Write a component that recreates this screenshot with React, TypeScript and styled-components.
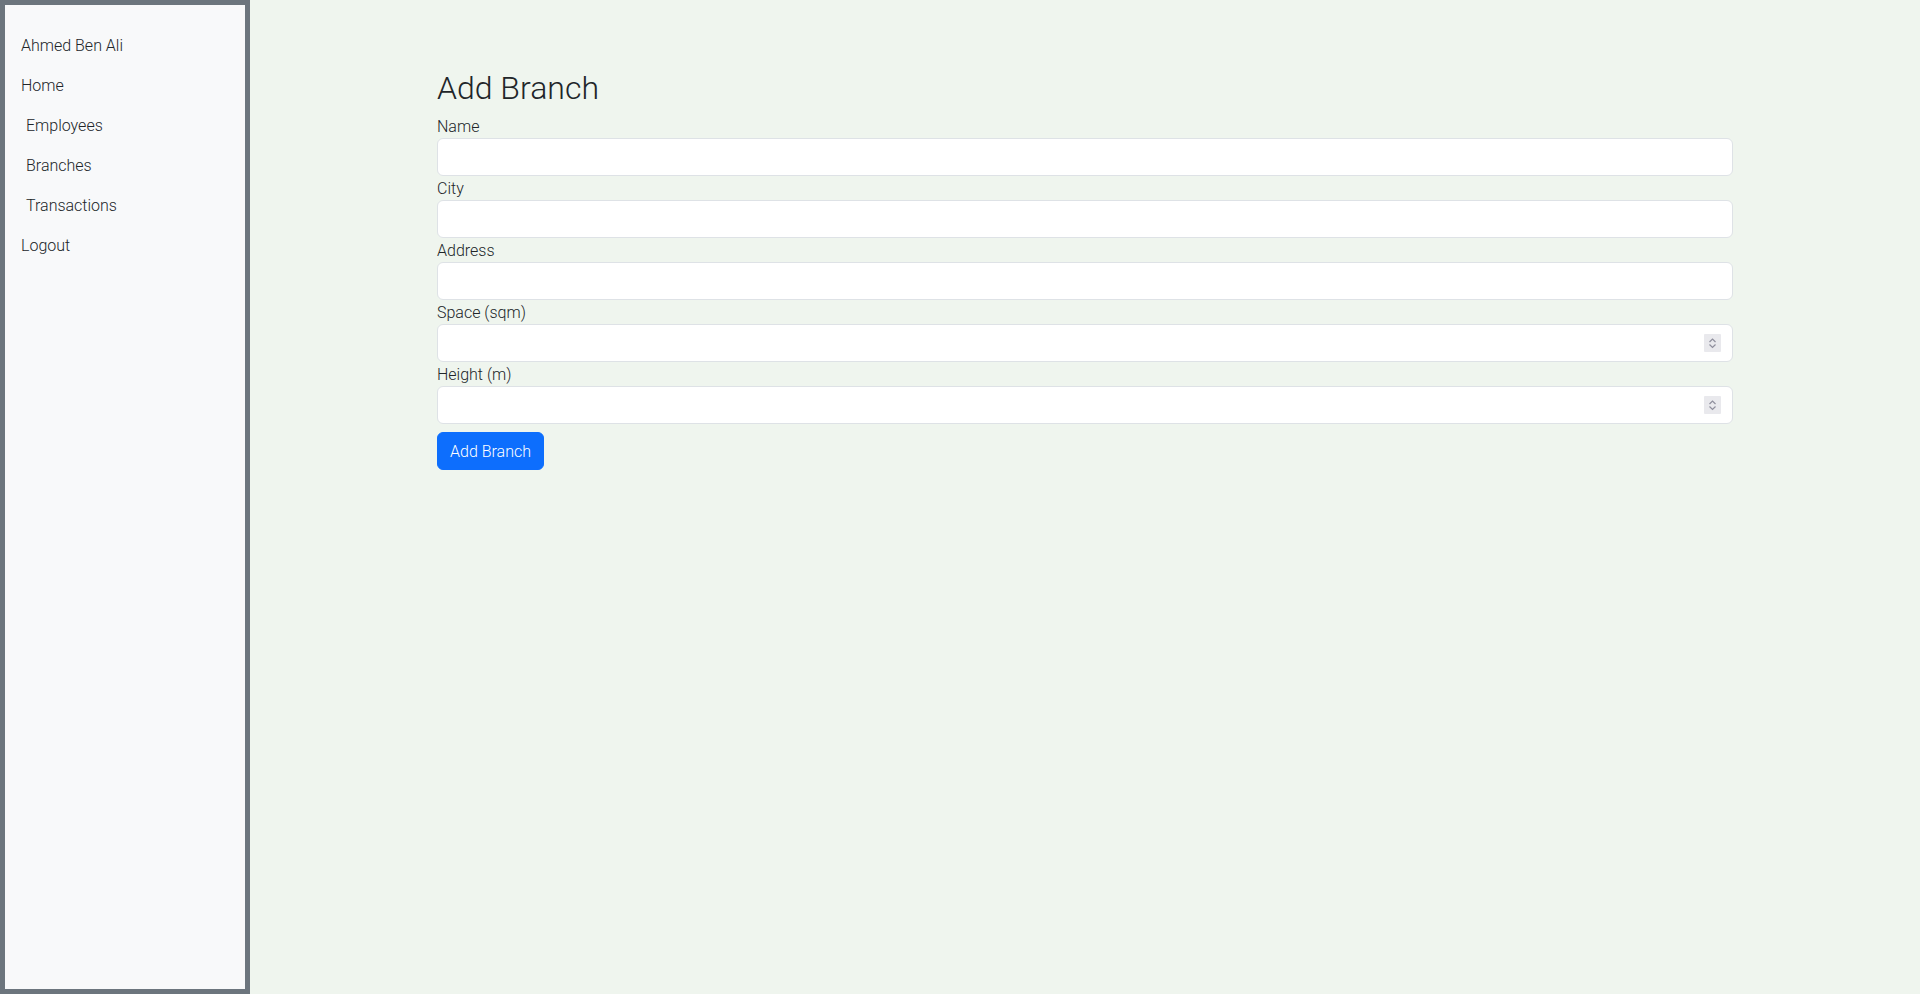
import React from "react";
import styled, { createGlobalStyle } from "styled-components";

const GlobalStyle = createGlobalStyle`
  *, *::before, *::after { box-sizing: border-box; }
  html, body { margin: 0; padding: 0; }
  body {
    font-family: Roboto, "Liberation Sans", sans-serif;
    font-weight: 300;
    font-size: 16px;
    line-height: 1.5;
    color: #212529;
    background: #eff5ee;
  }
`;

const Layout = styled.div`
  display: flex;
  min-height: 994px;
  height: 100vh;
`;

const Sidebar = styled.nav`
  width: 250px;
  flex: 0 0 250px;
  background: #f8f9fa;
  border: 5px solid #6c757d;
  padding-top: 20px;
  display: flex;
  flex-direction: column;
`;

const NavItem = styled.a<{ $indent?: boolean }>`
  display: block;
  padding: 9px 16px 7px ${(p) => (p.$indent ? "21px" : "16px")};
  line-height: 24px;
  color: #212529;
  text-decoration: none;
  cursor: pointer;
`;

const Main = styled.main`
  flex: 1;
  min-width: 0;
`;

const Container = styled.div`
  max-width: 1320px;
  margin: 0 auto;
  padding: 69px 12px 0;
`;

const Title = styled.h2`
  margin: 0 0 7px;
  font-size: 32px;
  font-weight: 300;
  line-height: 1.2;
`;

const Form = styled.form`
  display: flex;
  flex-direction: column;
`;

const Label = styled.label`
  display: block;
  padding-top: 1px;
  line-height: 23px;
`;

const InputWrap = styled.div`
  position: relative;
`;

const Input = styled.input`
  display: block;
  width: 100%;
  height: 38px;
  padding: 6px 12px;
  font-family: inherit;
  font-size: 16px;
  font-weight: 300;
  color: #212529;
  background: #fff;
  border: 1px solid #dee2e6;
  border-radius: 6px;
  outline: none;
  appearance: textfield;

  &::-webkit-inner-spin-button,
  &::-webkit-outer-spin-button {
    -webkit-appearance: none;
    margin: 0;
  }
`;

const Spinner = styled.span`
  position: absolute;
  right: 12px;
  top: 50%;
  transform: translateY(-50%);
  width: 17px;
  height: 18px;
  background: #e9e9ed;
  border-radius: 1px;
  display: flex;
  align-items: center;
  justify-content: center;
  pointer-events: none;
`;

const Button = styled.button`
  align-self: flex-start;
  margin-top: 8px;
  height: 38px;
  padding: 7px 12px 5px;
  font-family: inherit;
  font-size: 16px;
  font-weight: 300;
  line-height: 24px;
  color: #fff;
  background: #0d6efd;
  border: 1px solid #0d6efd;
  border-radius: 6px;
  cursor: pointer;
`;

const fields = [
  { label: "Name", type: "text" },
  { label: "City", type: "text" },
  { label: "Address", type: "text" },
  { label: "Space (sqm)", type: "number" },
  { label: "Height (m)", type: "number" },
];

const SpinIcon = () => (
  <svg width="17" height="18" viewBox="0 0 17 18" fill="none">
    <polyline points="5.5,8 8.5,5 11.5,8" stroke="#8f8f9d" strokeWidth="1.2" />
    <polyline points="5.5,10.5 8.5,13.5 11.5,10.5" stroke="#8f8f9d" strokeWidth="1.2" />
  </svg>
);

export default function App() {
  return (
    <>
      <GlobalStyle />
      <Layout>
        <Sidebar>
          <NavItem>Ahmed Ben Ali</NavItem>
          <NavItem>Home</NavItem>
          <NavItem $indent>Employees</NavItem>
          <NavItem $indent>Branches</NavItem>
          <NavItem $indent>Transactions</NavItem>
          <NavItem>Logout</NavItem>
        </Sidebar>
        <Main>
          <Container>
            <Title>Add Branch</Title>
            <Form onSubmit={(e) => e.preventDefault()}>
              {fields.map((f) => (
                <React.Fragment key={f.label}>
                  <Label>{f.label}</Label>
                  <InputWrap>
                    <Input type={f.type} />
                    {f.type === "number" && (
                      <Spinner>
                        <SpinIcon />
                      </Spinner>
                    )}
                  </InputWrap>
                </React.Fragment>
              ))}
              <Button type="submit">Add Branch</Button>
            </Form>
          </Container>
        </Main>
      </Layout>
    </>
  );
}
